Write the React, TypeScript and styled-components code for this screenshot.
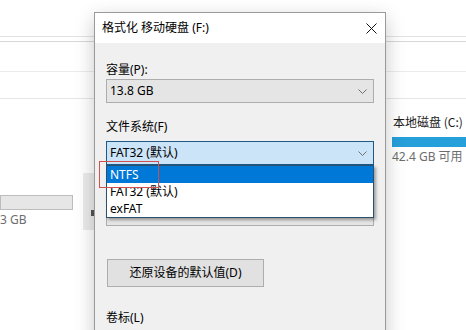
import React from "react";
import styled, { createGlobalStyle } from "styled-components";

const Global = createGlobalStyle`
  html, body { margin: 0; padding: 0; background: #fff; }
  body { font-family: "Noto Sans", "Noto Sans CJK SC", sans-serif; }
`;

const Stage = styled.div`
  position: relative;
  width: 466px;
  height: 330px;
  overflow: hidden;
  background: #fff;
  font-size: 12px;
  color: #000;
`;

const Explorer = styled.div`
  display: flex;
  flex-direction: column;
  height: 100%;
`;

const Band = styled.div<{ $h: number; $line: string }>`
  height: ${(p) => p.$h}px;
  border-bottom: 1px solid ${(p) => p.$line};
`;

const Drives = styled.div`
  display: grid;
  grid-template-columns: 94px 1fr 74px;
  flex: 1;
`;

const LeftCol = styled.div`
  display: flex;
  align-items: flex-start;
`;

const Tile = styled.div<{ $top: number }>`
  display: flex;
  flex-direction: column;
  margin-top: ${(p) => p.$top}px;
  width: 100%;
`;

const TileName = styled.div`
  font-family: "Noto Sans CJK SC", sans-serif;
  font-size: 12px;
  line-height: 16px;
  color: #1a1a1a;
  white-space: nowrap;
  padding-left: 1px;
`;

const Bar = styled.div<{ $h: number; $w?: number; $fill: string; $border: string; $mt: number }>`
  height: ${(p) => p.$h}px;
  width: ${(p) => (p.$w ? `${p.$w}px` : "100%")};
  background: ${(p) => p.$fill};
  border: 1px solid ${(p) => p.$border};
  box-sizing: border-box;
  margin: ${(p) => p.$mt}px 0 3px;
`;

const TileInfo = styled.div`
  font-family: "Noto Sans", "Noto Sans CJK SC", sans-serif;
  font-size: 12px;
  line-height: 14px;
  color: #6d6d6d;
  white-space: nowrap;
`;

const Strip = styled.div`
  flex: none;
  width: 11px;
  height: 57px;
  margin: 74px 0 0 9px;
  background: #ebebeb;
  display: flex;
  justify-content: flex-end;
  align-items: flex-start;
`;

const StripMark = styled.div`
  width: 3px;
  height: 6px;
  margin-top: 37px;
  background: #555;
`;

const Dialog = styled.div`
  position: absolute;
  left: 94px;
  top: 12px;
  width: 292px;
  height: 330px;
  box-sizing: border-box;
  border: 1px solid #9a9a9a;
  background: #f0f0f0;
  box-shadow: 0 6px 18px rgba(0, 0, 0, 0.22);
  display: flex;
  flex-direction: column;
  font-family: "Noto Sans", "Noto Sans CJK SC", sans-serif;
`;

const TitleBar = styled.div`
  height: 30px;
  background: #fff;
  display: flex;
  align-items: center;
  justify-content: space-between;
  padding: 0 8px 0 7px;
  flex: none;
`;

const Title = styled.div`
  font-size: 12px;
  line-height: 16px;
  white-space: nowrap;
`;

const Body = styled.div`
  display: flex;
  flex-direction: column;
  align-items: flex-start;
  padding: 0 11px;
`;

const Label = styled.div<{ $mt: number; $mb?: number }>`
  font-size: 12px;
  line-height: 16px;
  margin-top: ${(p) => p.$mt}px;
  margin-bottom: ${(p) => p.$mb ?? 0}px;
`;

const Spacer = styled.div<{ $h: number }>`
  height: ${(p) => p.$h}px;
  flex: none;
`;

const SelectWrap = styled.div`
  position: relative;
  width: 268px;
`;

const SelectBox = styled.div<{ $focus?: boolean }>`
  box-sizing: border-box;
  width: 100%;
  height: 24px;
  display: flex;
  align-items: center;
  justify-content: space-between;
  padding: 0 6px 0 3px;
  background: ${(p) => (p.$focus ? "#cce4f7" : "#e5e5e5")};
  border: 1px solid ${(p) => (p.$focus ? "#1d5a88" : "#adadad")};
  font-size: 12px;
  line-height: 16px;
`;

const SelectText = styled.span`
  color: #000;
  white-space: nowrap;
`;

const List = styled.div`
  position: absolute;
  left: 0;
  top: 24px;
  width: 268px;
  box-sizing: border-box;
  border: 1px solid #2b4f6e;
  background: #fff;
  box-shadow: 2px 2px 3px rgba(0, 0, 0, 0.35);
  z-index: 2;
`;

const Option = styled.div<{ $active?: boolean }>`
  height: 17px;
  line-height: 17px;
  padding-left: 3px;
  font-size: 12px;
  background: ${(p) => (p.$active ? "#0078d7" : "transparent")};
  color: ${(p) => (p.$active ? "#fff" : "#000")};
  white-space: nowrap;
`;

const Mark = styled.div`
  position: absolute;
  left: -7px;
  top: 20px;
  width: 60px;
  height: 27px;
  box-sizing: border-box;
  border: 1px solid #d0504f;
  z-index: 3;
`;

const Button = styled.div`
  box-sizing: border-box;
  margin-top: 33px;
  margin-left: 1px;
  width: 157px;
  height: 28px;
  background: #e1e1e1;
  border: 1px solid #adadad;
  display: flex;
  align-items: center;
  justify-content: center;
  font-size: 12px;
  line-height: 16px;
`;

const Chevron = () => (
  <svg width="9" height="5" viewBox="0 0 9 5">
    <path d="M0.5 0.5 L4.5 4.5 L8.5 0.5" fill="none" stroke="#707070" strokeWidth="1" />
  </svg>
);

const CloseIcon = () => (
  <svg width="11" height="11" viewBox="0 0 11 11">
    <path d="M0.5 0.5 L10.5 10.5 M10.5 0.5 L0.5 10.5" stroke="#111" strokeWidth="1" />
  </svg>
);

export default function App() {
  return (
    <>
      <Global />
      <Stage>
        <Explorer>
          <Band $h={36} $line="#e2e2e2" />
          <Band $h={4} $line="#d8d8d8" />
          <Band $h={29} $line="#ececec" />
          <Band $h={26} $line="#e6e6e6" />
          <Drives>
            <LeftCol>
              <Tile $top={96}>
                <Bar $h={15} $w={73} $mt={0} $fill="#e6e6e6" $border="#bcbcbc" />
                <TileInfo>3 GB</TileInfo>
              </Tile>
              <Strip>
                <StripMark />
              </Strip>
            </LeftCol>
            <div />
            <Tile $top={15}>
              <TileName>本地磁盘 (C:)</TileName>
              <Bar $h={10} $mt={7} $fill="#26a0da" $border="#26a0da" />
              <TileInfo>42.4 GB 可用</TileInfo>
            </Tile>
          </Drives>
        </Explorer>

        <Dialog>
          <TitleBar>
            <Title>格式化 移动硬盘 (F:)</Title>
            <CloseIcon />
          </TitleBar>
          <Body>
            <Label $mt={19} $mb={1}>容量(P):</Label>
            <SelectWrap>
              <SelectBox>
                <SelectText>13.8 GB</SelectText>
                <Chevron />
              </SelectBox>
            </SelectWrap>
            <Label $mt={16} $mb={6}>文件系统(F)</Label>
            <SelectWrap>
              <SelectBox $focus>
                <SelectText>FAT32 (默认)</SelectText>
                <Chevron />
              </SelectBox>
              <List>
                <Option $active>NTFS</Option>
                <Option>FAT32 (默认)</Option>
                <Option>exFAT</Option>
              </List>
              <Mark />
            </SelectWrap>
            <Spacer $h={37} />
            <SelectWrap>
              <SelectBox>
                <span />
                <Chevron />
              </SelectBox>
            </SelectWrap>
            <Button>还原设备的默认值(D)</Button>
            <Label $mt={23}>卷标(L)</Label>
          </Body>
        </Dialog>
      </Stage>
    </>
  );
}
